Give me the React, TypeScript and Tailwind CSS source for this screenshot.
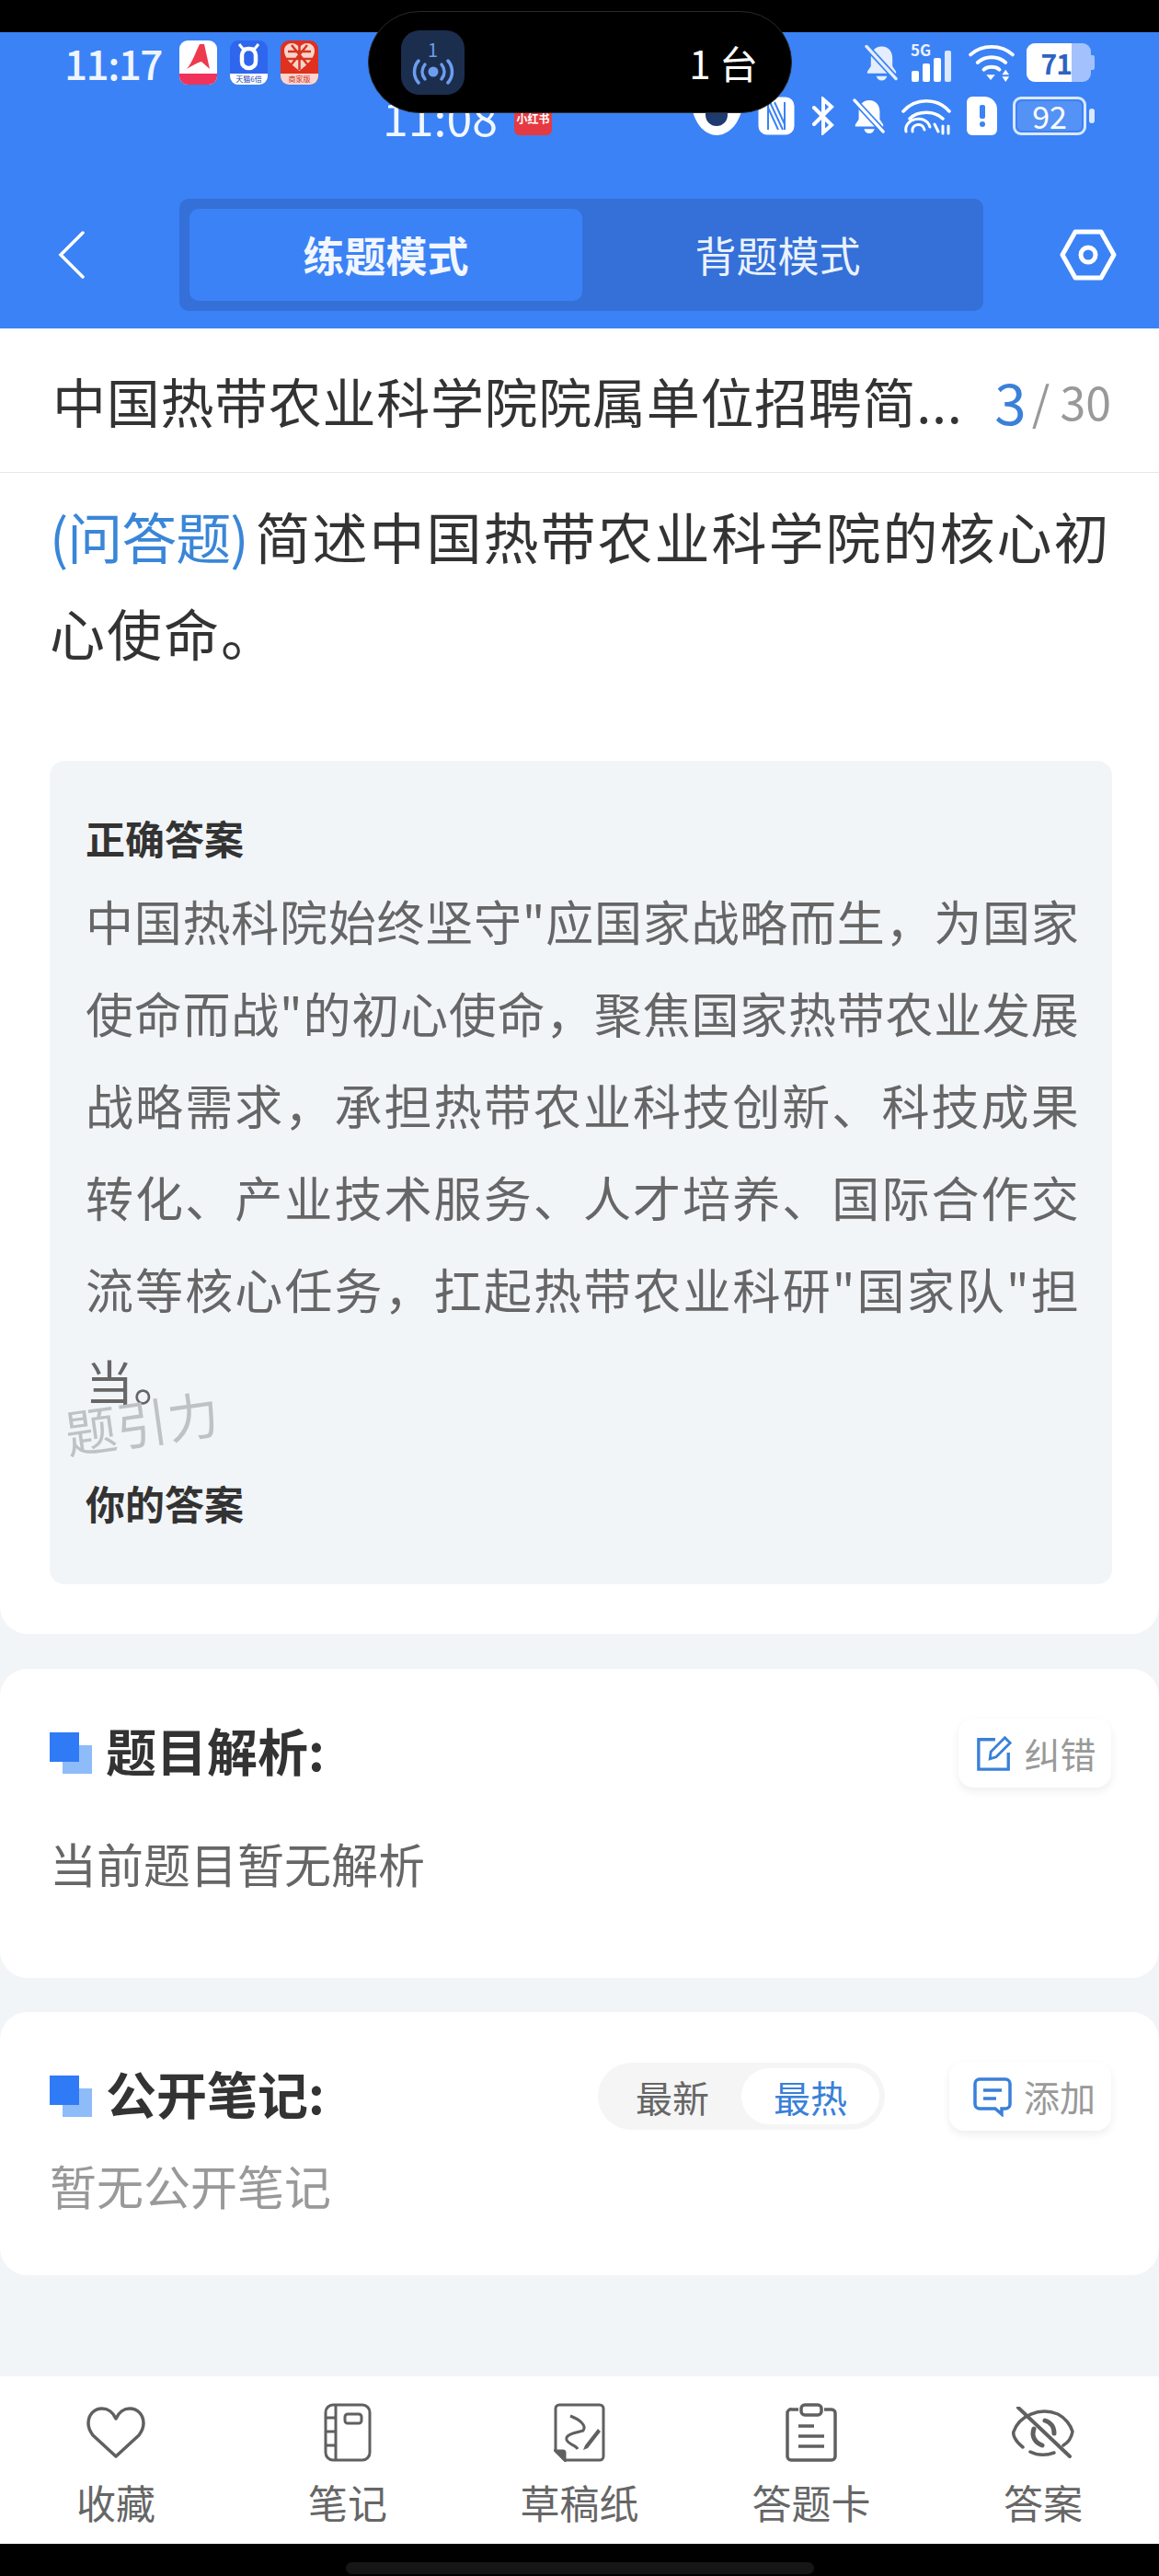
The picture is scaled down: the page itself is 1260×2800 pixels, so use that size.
const font = { fontFamily: '"Noto Sans CJK SC", "Noto Sans", sans-serif' }

function BellOff({ className = '', color = '#fff' }: { className?: string; color?: string }) {
  return (
    <svg viewBox="0 0 40 42" className={className}>
      <path d="M20 3c-8 0-12 6-12 13v9l-4 6v2h32v-2l-4-6v-9c0-7-4-13-12-13z" fill={color} />
      <path d="M14 36c1 3 3 5 6 5s5-2 6-5z" fill={color} />
      <path d="M3 3l33 36" stroke="#3b82f6" strokeWidth="7" />
      <path d="M3 3l33 36" stroke={color} strokeWidth="3.5" strokeLinecap="round" />
    </svg>
  )
}

function WifiIcon({ className = '' }: { className?: string }) {
  return (
    <svg viewBox="0 0 52 44" className={className} fill="none" stroke="#fff" strokeWidth="4" strokeLinecap="round">
      <path d="M2 13c13-12 35-12 48 0" />
      <path d="M10 22c9-8 23-8 32 0" />
      <path d="M17 30c5-4 13-4 18 0" />
      <path d="M20 36h10l-5 6z" fill="#fff" stroke="none" />
      <path d="M42 30l4 6h-8zM38 38h8l-4 6z" fill="#fff" stroke="none" />
    </svg>
  )
}

function Signal5G() {
  return (
    <div className="relative w-[50px] h-[42px]">
      <span className="absolute left-0 top-[-3px] text-[17px] font-bold leading-[20px] text-[#eaf2ff]">5G</span>
      <div className="absolute left-[1px] bottom-0 flex items-end gap-[4px]">
        <div className="w-[8px] h-[12px] rounded-[2px] bg-white" />
        <div className="w-[8px] h-[20px] rounded-[2px] bg-white" />
        <div className="w-[8px] h-[26px] rounded-[2px] bg-white" />
        <div className="w-[7px] h-[34px] rounded-[2px] bg-[#dbe8ff]" />
      </div>
    </div>
  )
}

function AppIconA() {
  return (
    <div className="w-[41px] h-[48px] rounded-[9px] bg-white overflow-hidden flex flex-col">
      <svg viewBox="0 0 41 36" className="w-[41px] h-[36px]">
        <path d="M8 31C14 24 18 12 22 4h5l6 27-9-8c-4 1-10 4-16 8z" fill="#ee3a4f" />
      </svg>
      <div className="h-[12px] bg-[#f0335a]" />
    </div>
  )
}

function AppIconU() {
  return (
    <div className="w-[41px] h-[48px] rounded-[9px] bg-[#2f66ee] overflow-hidden flex flex-col">
      <svg viewBox="0 0 41 36" className="w-[41px] h-[36px]" fill="none">
        <path d="M10 4l4 5h13l4-5" stroke="#fff" strokeWidth="3" />
        <rect x="13" y="9" width="15" height="21" rx="7" stroke="#fff" strokeWidth="4.5" />
      </svg>
      <div className="h-[12px] bg-white text-[8px] leading-[12px] text-center text-[#2144b0]">天猫6倍</div>
    </div>
  )
}

function AppIconHeart() {
  return (
    <div className="w-[41px] h-[48px] rounded-[9px] bg-[#e0301e] overflow-hidden flex flex-col">
      <svg viewBox="0 0 41 36" className="w-[41px] h-[36px]">
        <path d="M20.5 33C10 25 4 18 4 11c0-5 4-8 8-8 4 0 7 2 8.5 5C22 5 25 3 29 3c4 0 8 3 8 8 0 7-6 14-16.5 22z" fill="#f8d5cc" />
        <path d="M20.5 4v28M8 12h25M6 20h29M12 5l18 22M29 5L11 27" stroke="#d9341f" strokeWidth="2.5" />
      </svg>
      <div className="h-[12px] bg-[#fbd5cf] text-[8px] leading-[12px] text-center text-[#c8321f]">商家版</div>
    </div>
  )
}

function Battery71() {
  return (
    <div className="flex items-center">
      <div className="w-[70px] h-[42px] rounded-[9px] bg-[#a3c2fb] overflow-hidden">
        <div className="w-[49px] h-[42px] bg-white text-[#2e63c4] text-[30px] font-bold leading-[42px] text-right tracking-[-1px]">71</div>
      </div>
      <div className="w-[4px] h-[16px] rounded-r-[2px] bg-[#a3c2fb]" />
    </div>
  )
}

function Battery92() {
  return (
    <div className="flex items-center gap-[3px]">
      <div className="w-[80px] h-[42px] rounded-[9px] border-[3px] border-[#dbe8ff] p-[2px]">
        <div className="w-full h-full rounded-[5px] bg-[#5592f5] text-white text-[34px] leading-[32px] text-center">92</div>
      </div>
      <div className="w-[6px] h-[16px] rounded-[3px] bg-[#dbe8ff]" />
    </div>
  )
}

function StatusBar() {
  return (
    <div className="flex flex-col">
      {/* current status row */}
      <div className="flex items-center h-[42px] pl-[70px] pr-[70px]">
        <span className="text-[44px] leading-[42px] font-medium text-[#eef5ff] w-[125px] tracking-[-1.5px]">11:17</span>
        <div className="flex items-center gap-[14px]">
          <AppIconA />
          <AppIconU />
          <AppIconHeart />
        </div>
        <div className="ml-auto flex items-center">
          <BellOff className="w-[39px] h-[42px]" color="#e4eeff" />
          <div className="ml-[12px]"><Signal5G /></div>
          <WifiIcon className="ml-[12px] w-[52px] h-[42px]" />
          <div className="ml-[12px]"><Battery71 /></div>
        </div>
      </div>
      {/* older status row, half hidden by the island */}
      <div className="flex items-center h-[42px] mt-[16px] pl-[416px] pr-[70px]">
        <span className="text-[50px] leading-[42px] text-[#f1f7ff] w-[143px]">11:08</span>
        <div className="w-[41px] h-[42px] rounded-[6px] bg-[#e53a42] flex items-end justify-center pb-[12px]">
          <span className="text-[12px] leading-[12px] font-bold text-white">小红书</span>
        </div>
        <div className="ml-auto flex items-center">
          <svg viewBox="0 0 57 42" className="w-[57px] h-[42px]">
            <path d="M2 16C12-2 45-2 55 16 50 34 38 42 28 42S7 34 2 16z" fill="#fff" />
            <circle cx="28" cy="20" r="12" fill="#1f3a6e" />
          </svg>
          <svg viewBox="0 0 40 42" className="ml-[16px] w-[40px] h-[42px]" fill="none" stroke="#fff" strokeWidth="3">
            <rect x="2" y="2" width="36" height="38" rx="8" fill="#fff" />
            <path d="M11 6v30M29 6v30M13 6l14 30M18 6l11 24M11 12l11 24" stroke="#3b82f6" strokeWidth="2" />
          </svg>
          <svg viewBox="0 0 27 42" className="ml-[17px] w-[27px] h-[42px]" fill="none" stroke="#fff" strokeWidth="4" strokeLinecap="round">
            <path d="M4 12l19 19-9 8V3l9 8L4 30" />
          </svg>
          <BellOff className="ml-[18px] w-[38px] h-[42px]" />
          <svg viewBox="0 0 56 42" className="ml-[15px] w-[56px] h-[42px]" fill="none" stroke="#fff" strokeWidth="3.5" strokeLinecap="round">
            <path d="M3 16c13-15 37-15 50 0" />
            <path d="M10 24c9-9 27-9 36 0" />
            <path d="M6 38c-3-14 21-20 26-5" strokeWidth="3" />
            <path d="M13 38c-2-8 11-11 13-2" strokeWidth="3" />
            <path d="M37 30l4 8M46 32v8M52 32v8" strokeWidth="3" />
          </svg>
          <div className="ml-[16px] w-[33px] h-[42px] rounded-[6px] rounded-tr-[14px] bg-white flex flex-col items-center justify-center gap-[3px]">
            <div className="w-[6px] h-[15px] rounded-[2px] bg-[#3b82f6]" />
            <div className="w-[6px] h-[6px] rounded-full bg-[#3b82f6]" />
          </div>
          <div className="ml-[17px]"><Battery92 /></div>
        </div>
      </div>
    </div>
  )
}

function Island() {
  return (
    <div className="absolute left-[400px] top-[12px] w-[461px] h-[111px] rounded-[56px] bg-black border border-[#2a2a2a] flex items-center pl-[35px] pr-[36px]">
      <div className="w-[69px] h-[70px] rounded-[20px] bg-[#1c2e4d] flex flex-col items-center justify-center">
        <span className="text-[20px] leading-[20px] text-[#6d9df0]">1</span>
        <svg viewBox="0 0 50 28" className="w-[50px] h-[28px]" fill="none" stroke="#6d9df0" strokeWidth="3.5" strokeLinecap="round">
          <circle cx="25" cy="14" r="5.5" fill="#6d9df0" stroke="none" />
          <path d="M16 6c-4 5-4 11 0 16M34 6c4 5 4 11 0 16" />
          <path d="M9 2c-6 7-6 17 0 24M41 2c6 7 6 17 0 24" />
        </svg>
      </div>
      <span className="ml-auto text-[42px] leading-none text-white whitespace-nowrap">1 台</span>
    </div>
  )
}

function ModeTabs() {
  return (
    <div className="flex items-center h-[122px] mt-[69px] relative">
      <svg viewBox="0 0 30 52" className="absolute left-[63px] top-[35px] w-[30px] h-[52px]" fill="none" stroke="#fff" strokeWidth="3.5" strokeLinecap="round">
        <path d="M27 2L3 26l24 24" />
      </svg>
      <div className="ml-[195px] w-[874px] h-[122px] rounded-[10px] bg-[#3470d8] flex p-[11px]">
        <div className="w-[427px] rounded-[10px] bg-[#3b82f6] flex items-center justify-center text-[45px] font-bold text-[#f2f7ff]">
          练题模式
        </div>
        <div className="flex-1 flex items-center justify-center text-[45px] text-[#eaf2ff]">背题模式</div>
      </div>
      <svg viewBox="0 0 62 56" className="ml-[83px] w-[62px] h-[56px]" fill="none" stroke="#fff" strokeWidth="5" strokeLinejoin="round">
        <path d="M17 3h28l14 25-14 25H17L3 28z" />
        <circle cx="31" cy="28" r="8" />
      </svg>
    </div>
  )
}

function Marker() {
  return (
    <div className="relative w-[46px] h-[45px] shrink-0">
      <div className="absolute left-[14px] top-[14px] w-[32px] h-[31px] bg-[#8ebcf9]" />
      <div className="absolute left-0 top-0 w-[32px] h-[32px] bg-[#2f7bf6]" />
    </div>
  )
}

function ActionButton({ icon, label, className }: { icon: React.ReactNode; label: string; className: string }) {
  return (
    <div className={`flex items-center justify-center gap-[12px] rounded-[16px] bg-white shadow-[0_4px_10px_rgba(0,0,0,0.07)] ${className}`}>
      {icon}
      <span className="text-[39px] leading-none text-[#999]">{label}</span>
    </div>
  )
}

function NavItem({ icon, label }: { icon: React.ReactNode; label: string }) {
  return (
    <div className="flex-1 flex flex-col items-center">
      <div className="h-[66px] flex items-center justify-center">{icon}</div>
      <span className="mt-[11px] text-[43px] leading-[62px] text-[#666]">{label}</span>
    </div>
  )
}

export default function App() {
  return (
    <div style={font} className="w-[1260px] h-[2800px] flex flex-col bg-[#f2f5f8] relative overflow-hidden">
      <div className="h-[35px] bg-black shrink-0" />
      <div className="h-[322px] bg-[#3b82f6] pt-[12px] shrink-0">
        <StatusBar />
        <ModeTabs />
      </div>
      <Island />

      <div className="flex-1 flex flex-col">
        {/* question */}
        <div className="bg-white rounded-b-[30px] pb-[54px]">
          <div className="h-[157px] border-b border-[#e5e7eb] flex items-center pl-[57px] pr-[52px]">
            <span className="flex-1 text-[58px] leading-none text-[#333] tracking-[0.7px] whitespace-nowrap">
              中国热带农业科学院院属单位招聘简...
            </span>
            <span className="text-[62px] leading-none text-[#3a80d8] ml-[24px]">3</span>
            <span className="text-[50px] leading-none text-[#999] ml-[6px]">/ 30</span>
          </div>
          <div className="pt-[15px] pl-[54px] pr-[40px] text-[60px] leading-[105px] tracking-[2px] text-[#333]">
            <span className="text-[#3a86d8] tracking-[-1px]">(问答题)</span>
            <span className="ml-[8px]">简述中国热带农业科学院的核心初心使命。</span>
          </div>
          <div className="relative mt-[88px] ml-[54px] mr-[51px] h-[895px] rounded-[16px] bg-[#f2f5f8] pt-[51px] pl-[39px] pr-[36px]">
            <div className="text-[43px] leading-[64px] font-bold text-[#333]">正确答案</div>
            <div className="mt-[9px] text-[52px] leading-[100px] tracking-[0.3px] text-justify text-[#666]">
              中国热科院始终坚守"应国家战略而生，为国家使命而战"的初心使命，聚焦国家热带农业发展战略需求，承担热带农业科技创新、科技成果转化、产业技术服务、人才培养、国际合作交流等核心任务，扛起热带农业科研"国家队"担当。
            </div>
            <div className="mt-[50px] text-[43px] leading-[64px] font-bold text-[#333]">你的答案</div>
            <div className="absolute left-[16px] top-[690px] -rotate-[8deg] text-[56px] leading-none text-[#bfc2c5]">题引力</div>
          </div>
        </div>

        {/* analysis */}
        <div className="mt-[38px] h-[336px] bg-white rounded-[30px] pl-[54px] pr-[52px] pt-[54px]">
          <div className="flex items-center h-[75px]">
            <Marker />
            <span className="ml-[15px] pb-[8px] text-[55px] leading-none font-bold text-[#333]">题目解析:</span>
            <ActionButton
              className="ml-auto w-[166px] h-[75px] pl-[3px]"
              label="纠错"
              icon={
                <svg viewBox="0 0 42 42" className="w-[40px] h-[40px]" fill="none" stroke="#3a80d8" strokeWidth="3.5">
                  <path d="M22 5H3v34h34V20" />
                  <path d="M16 27l1-8L33 3l6 6-16 16z" strokeWidth="3" />
                </svg>
              }
            />
          </div>
          <div className="mt-[50px] text-[51px] leading-[64px] text-[#666]">当前题目暂无解析</div>
        </div>

        {/* notes */}
        <div className="mt-[37px] h-[286px] bg-white rounded-[30px] pl-[54px] pr-[52px] pt-[54px]">
          <div className="flex items-center h-[75px]">
            <Marker />
            <span className="ml-[15px] pb-[8px] text-[55px] leading-none font-bold text-[#333]">公开笔记:</span>
            <div className="ml-auto w-[312px] h-[73px] rounded-[37px] bg-[#f5f5f5] flex items-center p-[6px] text-[40px] leading-none">
              <span className="flex-1 text-center text-[#666]">最新</span>
              <span className="w-[150px] h-[61px] rounded-[31px] bg-white text-[#3a80d8] flex items-center justify-center">最热</span>
            </div>
            <ActionButton
              className="ml-[70px] w-[176px] h-[75px] pl-[8px]"
              label="添加"
              icon={
                <svg viewBox="0 0 44 44" className="w-[44px] h-[44px]" fill="none" stroke="#3a80d8" strokeWidth="3.5">
                  <path d="M8 3h28a5 5 0 0 1 5 5v22a5 5 0 0 1-5 5h-4v6l-7-6H8a5 5 0 0 1-5-5V8a5 5 0 0 1 5-5z" />
                  <path d="M12 15h20M12 24h14" />
                </svg>
              }
            />
          </div>
          <div className="mt-[27px] text-[51px] leading-[64px] text-[#999]">暂无公开笔记</div>
        </div>
      </div>

      {/* bottom nav */}
      <div className="h-[182px] bg-white flex pt-[28px] shrink-0">
        <NavItem
          label="收藏"
          icon={
            <svg viewBox="0 0 64 56" className="w-[64px] h-[56px]" fill="none" stroke="#606060" strokeWidth="3.5" strokeLinejoin="round">
              <path d="M32 13C29 6 23 2 17 2 8 2 2 9 2 18c0 5 2 9 5 13l25 23 25-23c3-4 5-8 5-13 0-9-6-16-15-16-6 0-12 4-15 11z" />
            </svg>
          }
        />
        <NavItem
          label="笔记"
          icon={
            <svg viewBox="0 0 52 64" className="w-[52px] h-[64px]" fill="none" stroke="#606060" strokeWidth="3">
              <rect x="2" y="2" width="48" height="60" rx="8" />
              <path d="M13 2v60M2 16h11M2 31h11M2 46h11" />
              <rect x="23" y="12" width="18" height="10" rx="3" />
            </svg>
          }
        />
        <NavItem
          label="草稿纸"
          icon={
            <svg viewBox="0 0 56 64" className="w-[56px] h-[64px]" fill="none" stroke="#606060" strokeWidth="3">
              <path d="M12 62H50a4 4 0 0 0 4-4V6a4 4 0 0 0-4-4H6a4 4 0 0 0-4 4v46z" />
              <path d="M2 52h8a2 2 0 0 1 2 2v8z" fill="#606060" />
              <path d="M18 14c10 4 18 10 14 16-8 2-20 4-18 10 2 5 10 6 12 10" />
              <path d="M34 46l14-18 3 3-14 18-5 2z" fill="#606060" stroke="none" />
            </svg>
          }
        />
        <NavItem
          label="答题卡"
          icon={
            <svg viewBox="0 0 56 64" className="w-[56px] h-[64px]" fill="none" stroke="#606060" strokeWidth="3.5">
              <path d="M14 7H7a4 4 0 0 0-5 4v47a4 4 0 0 0 4 4h44a4 4 0 0 0 4-4V11a4 4 0 0 0-4-4h-8" />
              <rect x="17" y="2" width="22" height="11" rx="4" />
              <path d="M14 25h17M14 36h28M14 47h28" />
            </svg>
          }
        />
        <NavItem
          label="答案"
          icon={
            <svg viewBox="0 0 68 56" className="w-[68px] h-[56px]" fill="none" stroke="#606060" strokeWidth="3.5" strokeLinecap="round">
              <path d="M12 44C3 37 1 30 2 27 8 10 30 0 50 8c8 4 14 12 16 19-1 6-5 12-10 15M20 49c8 4 18 4 26 1" />
              <path d="M7 1l56 53" strokeWidth="4" />
              <path d="M36 15c6 2 10 7 10 14M24 24c-3 8 1 15 9 18" strokeWidth="5" />
            </svg>
          }
        />
      </div>
      <div className="h-[35px] bg-black shrink-0 flex justify-center pt-[20px]">
        <div className="w-[509px] h-[13px] rounded-full bg-[#161616]" />
      </div>
    </div>
  )
}
